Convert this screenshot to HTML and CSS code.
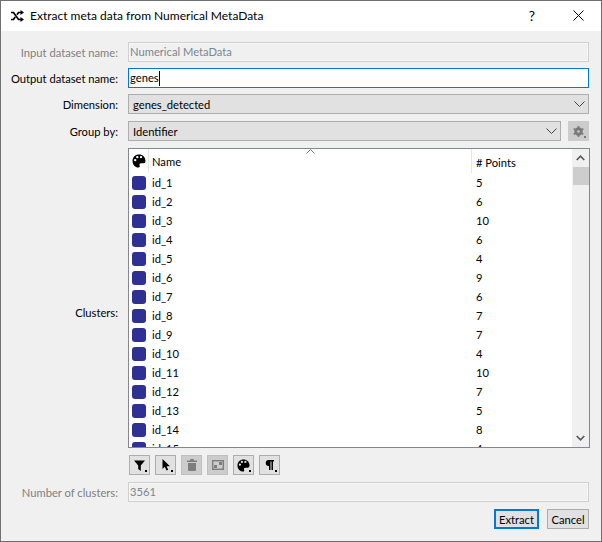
FILE: index.html
```html
<!DOCTYPE html>
<html lang="en">
<head>
    <meta charset="UTF-8">
    <title>Extract meta data</title>
    <link rel="stylesheet" href="styles.css">
</head>
<body>
    <div class="dialog">
        <div class="titlebar">
            <svg class="title-icon" width="13" height="12" viewBox="0 0 13 12">
                <path d="M0 2.500h2.500l5 7h2.500M0 9.500h2.500l1.700-2.400M6 4.700l1.500-2.200h2.500" fill="none" stroke="#000" stroke-width="1.700"/>
                <path d="M9.500 0l3.500 2.500-3.500 2.500zM9.500 7l3.500 2.500-3.500 2.500z" fill="#000"/>
            </svg>
            <span class="title-text">Extract meta data from Numerical MetaData</span>
            <span class="help">?</span>
            <svg class="close" width="11" height="11" viewBox="0 0 11 11">
                <path d="M0.500 0.500l10 10M10.500 0.500l-10 10" fill="none" stroke="#000" stroke-width="1"/>
            </svg>
        </div>
        <div class="form">
            <label class="disabled">Input dataset name:</label>
            <div class="field field-disabled">Numerical MetaData</div>

            <label>Output dataset name:</label>
            <div class="field field-focus">genes<span class="caret"></span></div>

            <label>Dimension:</label>
            <div class="combo">
                <span>genes_detected</span>
                <svg width="11" height="6" viewBox="0 0 11 6"><path d="M0.500 0.500l5 5 5-5" fill="none" stroke="#444"/></svg>
            </div>

            <label>Group by:</label>
            <div class="group-row">
                <div class="combo">
                    <span>Identifier</span>
                    <svg width="11" height="6" viewBox="0 0 11 6"><path d="M0.500 0.500l5 5 5-5" fill="none" stroke="#444"/></svg>
                </div>
                <div class="tool tool-off gear">
                    <svg width="11" height="11" viewBox="0 0 11 11">
                        <circle cx="5.500" cy="5.500" r="3" fill="none" stroke="#7a7a7a" stroke-width="2.400"/>
                        <path d="M5.500 0v11M0.700 2.700l9.600 5.600M10.300 2.700l-9.600 5.600" stroke="#7a7a7a" stroke-width="1.600"/>
                        <circle cx="5.500" cy="5.500" r="1.300" fill="#c8c8c8"/>
                    </svg>
                    <i class="dot dot-off"></i>
                </div>
            </div>

            <label>Clusters:</label>
            <div class="clusters">
                <div class="list">
                    <div class="list-main">
                        <div class="list-head">
                            <div class="head-swatch">
                                <svg width="14" height="14" viewBox="0 0 14 14">
                                    <path fill-rule="evenodd" fill="#000" d="M7 0.500C3.200 0.500 0.500 3.200 0.500 7s2.800 6.500 5.800 6.500c1.500 0 1.800-1 1.300-2-.5-1.200.2-2.200 1.500-2.200h2.400c1.200 0 2-.8 2-2.200C13.500 3.200 10.800 0.500 7 0.500zM3.200 7.300a1.200 1.200 0 1 1 0-2.400 1.200 1.200 0 0 1 0 2.400zM5.300 4.300a1.200 1.200 0 1 1 0-2.400 1.200 1.200 0 0 1 0 2.400zM9 4.300a1.200 1.200 0 1 1 0-2.400 1.200 1.200 0 0 1 0 2.400z"/>
                                </svg>
                            </div>
                            <div class="head-name">Name<svg class="sort" width="9" height="5" viewBox="0 0 9 5"><path d="M0.500 4.500l4-4 4 4" fill="none" stroke="#777"/></svg></div>
                            <div class="head-points"># Points</div>
                        </div>
                        <div class="rows">
                            <div class="row"><i class="swatch"></i><span class="name">id_1</span><span>5</span></div>
                            <div class="row"><i class="swatch"></i><span class="name">id_2</span><span>6</span></div>
                            <div class="row"><i class="swatch"></i><span class="name">id_3</span><span>10</span></div>
                            <div class="row"><i class="swatch"></i><span class="name">id_4</span><span>6</span></div>
                            <div class="row"><i class="swatch"></i><span class="name">id_5</span><span>4</span></div>
                            <div class="row"><i class="swatch"></i><span class="name">id_6</span><span>9</span></div>
                            <div class="row"><i class="swatch"></i><span class="name">id_7</span><span>6</span></div>
                            <div class="row"><i class="swatch"></i><span class="name">id_8</span><span>7</span></div>
                            <div class="row"><i class="swatch"></i><span class="name">id_9</span><span>7</span></div>
                            <div class="row"><i class="swatch"></i><span class="name">id_10</span><span>4</span></div>
                            <div class="row"><i class="swatch"></i><span class="name">id_11</span><span>10</span></div>
                            <div class="row"><i class="swatch"></i><span class="name">id_12</span><span>7</span></div>
                            <div class="row"><i class="swatch"></i><span class="name">id_13</span><span>5</span></div>
                            <div class="row"><i class="swatch"></i><span class="name">id_14</span><span>8</span></div>
                            <div class="row"><i class="swatch"></i><span class="name">id_15</span><span>4</span></div>
                        </div>
                    </div>
                    <div class="scrollbar">
                        <svg class="arrow" width="9" height="6" viewBox="0 0 9 6"><path d="M0.700 5l3.800-3.800L8.300 5" fill="none" stroke="#555" stroke-width="1.600"/></svg>
                        <div class="thumb"></div>
                        <div class="track"></div>
                        <svg class="arrow" width="9" height="6" viewBox="0 0 9 6"><path d="M0.700 1l3.800 3.800L8.300 1" fill="none" stroke="#555" stroke-width="1.600"/></svg>
                    </div>
                </div>
                <div class="toolbar">
                    <div class="tool">
                        <svg width="11" height="11" viewBox="0 0 11 11"><path d="M0 0.500h11L6.800 5.500V11L4.200 9V5.500z" fill="#000"/></svg>
                        <i class="dot"></i>
                    </div>
                    <div class="tool">
                        <svg width="8" height="12" viewBox="0 0 8 12"><path d="M0.500 0v10l2.300-2.200L4.500 11.500l1.700-.7-1.600-3.500H8z" fill="#000"/></svg>
                        <i class="dot"></i>
                    </div>
                    <div class="tool tool-off">
                        <svg width="10" height="12" viewBox="0 0 10 12"><path d="M0 1.500h3.300V0h3.400v1.500H10V3H0zM1 4h8v7a1 1 0 0 1-1 1H2a1 1 0 0 1-1-1z" fill="#7d7d7d"/></svg>
                    </div>
                    <div class="tool tool-off">
                        <svg width="12" height="10" viewBox="0 0 12 10">
                            <rect x="0.700" y="0.700" width="10.600" height="8.600" fill="none" stroke="#7d7d7d" stroke-width="1.400"/>
                            <path d="M2 8V5h3v3zM7 5V2h3v3z" fill="#7d7d7d"/>
                        </svg>
                    </div>
                    <div class="tool">
                        <svg width="13" height="13" viewBox="0 0 14 14"><path fill-rule="evenodd" fill="#000" d="M7 0.500C3.200 0.500 0.500 3.200 0.500 7s2.800 6.500 5.800 6.500c1.500 0 1.800-1 1.300-2-.5-1.200.2-2.200 1.500-2.200h2.400c1.200 0 2-.8 2-2.200C13.500 3.200 10.800 0.500 7 0.500zM3.200 7.300a1.200 1.200 0 1 1 0-2.400 1.200 1.200 0 0 1 0 2.400zM5.300 4.300a1.200 1.200 0 1 1 0-2.400 1.200 1.200 0 0 1 0 2.400zM9 4.300a1.200 1.200 0 1 1 0-2.400 1.200 1.200 0 0 1 0 2.400z"/></svg>
                        <i class="dot"></i>
                    </div>
                    <div class="tool">
                        <svg width="9" height="10" viewBox="0 0 9 10"><path d="M3.500 0H9v1.500H8V10H6.500V1.500h-1V10H4V6A3 3 0 0 1 3.500 0z" fill="#000"/></svg>
                        <i class="dot"></i>
                    </div>
                </div>
            </div>

            <label class="disabled">Number of clusters:</label>
            <div class="field field-disabled">3561</div>
        </div>
        <div class="actions">
            <button class="btn btn-default">Extract</button>
            <button class="btn">Cancel</button>
        </div>
    </div>
</body>
</html>
```

FILE: styles.css
```css
* {
    box-sizing: border-box;
}
html, body {
    margin: 0;
    padding: 0;
}
body {
    width: 602px;
    height: 542px;
    overflow: hidden;
    font-family: Lato, "Open Sans", sans-serif;
    font-size: 11.2px;
    color: #000;
    background: #f0f0f0;
}
.dialog {
    width: 602px;
    height: 542px;
    border: 1px solid #707070;
    display: flex;
    flex-direction: column;
}
.titlebar {
    height: 30px;
    flex: none;
    background: #fff;
    display: flex;
    align-items: center;
    padding: 0 0 1px 10px;
}
.title-text {
    margin-left: 6px;
    font-size: 12px;
    flex: 1;
}
.help {
    font-size: 14px;
    margin-right: 38px;
}
.close {
    margin-right: 17px;
}
.form {
    display: grid;
    grid-template-columns: 117px 461px;
    column-gap: 10px;
    row-gap: 6px;
    padding-top: 11px;
    grid-template-rows: 20px 20px 21px 21px 328px 20px;
}
label {
    text-align: right;
    align-self: center;
    white-space: nowrap;
}
.disabled {
    color: #808080;
}
.field {
    height: 20px;
    padding-left: 1px;
    line-height: 18px;
    border: 1px solid #ccc;
    background: #f0f0f0;
}
.field-disabled {
    color: #7c8590;
    border-color: #cfcfcf;
    box-shadow: inset 0 0 0 1px #f7f7f7;
}
.field-focus {
    background: #fff;
    border-color: #0078d7;
    display: flex;
    align-items: center;
}
.caret {
    width: 1px;
    height: 15px;
    background: #000;
}
.combo {
    flex: 1;
    height: 20px;
    display: flex;
    align-items: center;
    justify-content: space-between;
    padding: 0 3px 0 4px;
    background: #e1e1e1;
    border: 1px solid #adadad;
}
.group-row {
    display: flex;
    gap: 7px;
    height: 20px;
}
.tool {
    position: relative;
    width: 21px;
    height: 20px;
    flex: none;
    display: flex;
    align-items: center;
    justify-content: center;
    background: #e1e1e1;
    border: 1px solid #adadad;
}
.tool-off {
    background: #cccccc;
    border-color: #bfbfbf;
}
.gear {
    background: #cccccc;
    border-color: #cccccc;
}
.dot {
    position: absolute;
    right: 2px;
    bottom: 2px;
    width: 2px;
    height: 2px;
    background: #000;
}
.dot-off {
    background: #7a7a7a;
}
.clusters {
    display: flex;
    flex-direction: column;
    gap: 7px;
}
.list {
    display: flex;
    height: 300px;
    width: 462px;
    border: 1px solid #828790;
    background: #fff;
    overflow: hidden;
}
.list-main {
    flex: 1;
    min-width: 0;
}
.list-head {
    display: flex;
    height: 24px;
    align-items: center;
}
.head-swatch {
    width: 20px;
    height: 24px;
    padding: 5px 0 0 3px;
    border-right: 1px solid #e5e5e5;
}
.head-name {
    position: relative;
    width: 323px;
    height: 24px;
    padding-left: 3px;
    line-height: 26px;
    border-right: 1px solid #e5e5e5;
}
.sort {
    position: absolute;
    left: 157px;
    top: 0;
}
.head-points {
    padding: 2px 0 0 4px;
}
.rows {
    height: 274px;
    overflow: hidden;
}
.row {
    display: flex;
    align-items: center;
    height: 19px;
}
.swatch {
    width: 14px;
    height: 14px;
    margin-left: 3px;
    border-radius: 3px;
    background: #2e3192;
}
.name {
    width: 330px;
    padding-left: 6px;
}
.scrollbar {
    width: 17px;
    flex: none;
    background: #f0f0f0;
    display: flex;
    flex-direction: column;
    align-items: center;
}
.arrow {
    flex: none;
    margin: 6px 0;
}
.thumb {
    width: 16px;
    height: 18px;
    background: #cdcdcd;
    flex: none;
}
.track {
    flex: 1;
}
.toolbar {
    display: flex;
    gap: 5px;
    padding-left: 1px;
}
.actions {
    display: flex;
    justify-content: flex-end;
    gap: 8px;
    padding: 7px 12px 0 0;
}
.btn {
    height: 20px;
    width: 42px;
    padding: 0;
    font: inherit;
    background: #e1e1e1;
    border: 1px solid #adadad;
}
.btn-default {
    width: 45px;
    border: 2px solid #0078d7;
}
```
